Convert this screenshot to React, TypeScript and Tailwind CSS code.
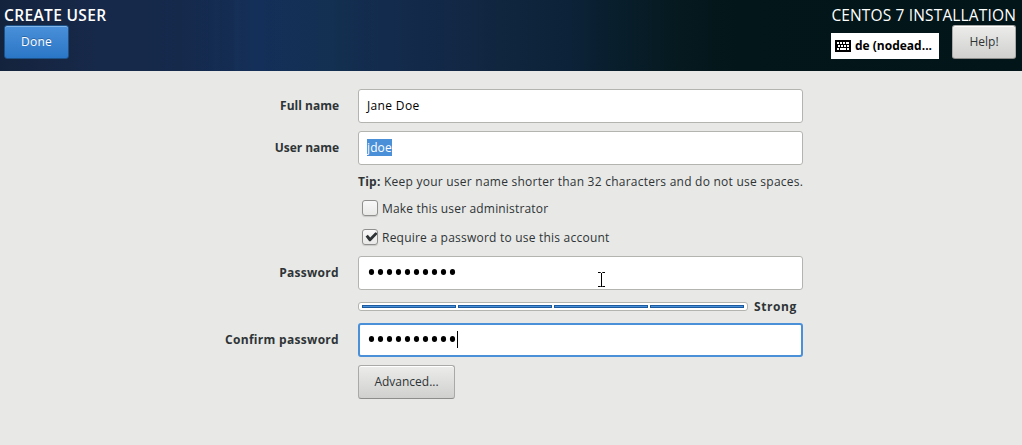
import type { ReactNode } from "react";

const buttonShape =
  "flex h-[34px] items-center justify-center rounded-[3px] border text-[12px] leading-none";
const greyButton =
  "border-[#a9aaa7] border-b-[#8d8e8b] bg-linear-to-b from-[#ececeb] to-[#d0d0ce] text-[#2e3436] shadow-[inset_0_1px_0_#fff]";

function Row({ label, height, children }: { label?: ReactNode; height: string; children: ReactNode }) {
  return (
    <div className={`flex items-center ${height}`}>
      <div className="w-[339px] shrink-0 text-right text-[12px] font-bold whitespace-nowrap">{label}</div>
      <div className="ml-[19px] flex h-full w-[445px] shrink-0 items-center whitespace-nowrap">{children}</div>
    </div>
  );
}

function Field({ focused, children }: { focused?: boolean; children?: ReactNode }) {
  return (
    <div
      className={`relative flex h-[34px] w-full items-center rounded-[3px] bg-white text-[12px] tracking-[0.35px] text-black ${
        focused ? "border-2 border-[#4a90d9] pl-[7px]" : "border border-[#b3b3b0] pl-2"
      }`}
    >
      {children}
    </div>
  );
}

function Dots() {
  return (
    <svg width="90" height="8" viewBox="0 0 90 8" className="-mt-[2px]">
      {Array.from({ length: 10 }, (_, i) => (
        <ellipse key={i} cx={4.5 + i * 9} cy="4" rx="2.6" ry="3" fill="#000" />
      ))}
    </svg>
  );
}

function Checkbox({ checked }: { checked?: boolean }) {
  return (
    <span className="mr-1 ml-1 flex size-4 items-center justify-center rounded-[3px] border border-[#8f908d] bg-linear-to-b from-[#f8f8f8] to-[#e9e9e8] shadow-[0_1px_1px_#c9c9c7]">
      {checked && (
        <svg width="14" height="14" viewBox="0 0 14 14" className="shrink-0">
          <path d="M2.6 6.4 4.8 4.8l2.4 2.6 5.2-5.2L14 3v1.4L7.6 11.2H6.2Z" fill="#2e3436" />
        </svg>
      )}
    </span>
  );
}

function Keyboard() {
  return (
    <svg width="16" height="12" viewBox="0 0 16 12" shapeRendering="crispEdges">
      <rect width="16" height="12" rx="1" fill="#000" />
      <g fill="#fff">
        {[2, 5, 8, 11].map((x) => (
          <rect key={x} x={x} y="2" width="2" height="2" />
        ))}
        <rect x="13" y="2" width="1" height="2" />
        {[3, 6, 9, 12].map((x) => (
          <rect key={x} x={x} y="5" width="2" height="2" />
        ))}
        <rect x="2" y="8" width="2" height="2" />
        <rect x="5" y="8" width="6" height="2" />
        <rect x="12" y="8" width="2" height="2" />
      </g>
    </svg>
  );
}

export default function App() {
  return (
    <div className="h-[445px] w-[1022px] overflow-hidden bg-[#e8e8e6] font-['Open_Sans','Noto_Sans',sans-serif] text-[#2e3436]">
      <header className="flex h-[71px] justify-between bg-[linear-gradient(90deg,transparent_160px,#112a5030_168px,transparent_176px,transparent_200px,#102b5730_210px,#17345b30_216px,transparent_221px,transparent_233px,#1c3d6530_237px,transparent_242px,transparent_262px,#0f2b5530_270px,transparent_285px,transparent_345px,#0f274e40_362px,transparent_374px),linear-gradient(90deg,#14233d_0,#17294a_100px,#15294b_180px,#142c52_230px,#14305a_260px,#132f50_340px,#13294a_420px,#10263f_500px,#0c2238_570px,#081e2b_620px,#05191f_680px,#031619_740px,#021519_100%)] pr-[6px] pl-1 text-white">
        <div className="flex flex-col">
          <h1 className="flex h-[25px] items-center pt-[6px] text-[15.5px] leading-[19px] font-semibold whitespace-nowrap">
            <span className="tracking-[0.35px]">CREATE USER</span>
          </h1>
          <button className={`${buttonShape} w-[65px] border-[#1c5187] bg-linear-to-b from-[#4a90d9] to-[#2a76c6] text-white shadow-[inset_0_1px_0_#83b5e8]`}>
            <span className="tracking-[0.2px] [text-shadow:0_-1px_0_#1c518799]">Done</span>
          </button>
        </div>
        <div className="flex flex-col items-end">
          <div className="flex h-[25px] items-center pt-[6px] text-[15.5px] leading-[19px] whitespace-nowrap">
            <span className="tracking-[0.15px]">CENTOS 7 INSTALLATION</span>
          </div>
          <div className="flex items-end gap-[13px]">
            <div className="flex h-[26px] w-[108px] items-center gap-1 bg-white pl-1 text-[12px] font-bold whitespace-nowrap text-black">
              <Keyboard />
              <span>de (nodead...</span>
            </div>
            <button className={`${buttonShape} ${greyButton} w-16`}>
              <span>Help!</span>
            </button>
          </div>
        </div>
      </header>

      <main className="flex flex-col pt-[18px]">
        <Row label="Full name" height="h-[34px]">
          <Field><span>Jane Doe</span></Field>
        </Row>
        <div className="h-2" />
        <Row label={<span className="tracking-[-0.05px]">User name</span>} height="h-[34px]">
          <Field><span className="-mt-px h-[17px] bg-[#4a90d9] leading-[17px] tracking-[0.1px] text-white">jdoe</span></Field>
        </Row>
        <Row height="h-[34px]">
          <span className="text-[12px] tracking-[0.24px]"><b>Tip:</b> Keep your user name shorter than 32 characters and do not use spaces.</span>
        </Row>
        <Row height="h-[18px]">
          <Checkbox />
          <span className="pt-[2px] text-[12px] tracking-[0.17px]">Make this user administrator</span>
        </Row>
        <div className="h-[11px]" />
        <Row height="h-[18px]">
          <Checkbox checked />
          <span className="pt-[2px] text-[12px] tracking-[0.22px]">Require a password to use this account</span>
        </Row>
        <div className="h-[10px]" />
        <Row label={<span className="tracking-[0.3px]">Password</span>} height="h-[34px]">
          <Field>
            <Dots />
            <svg width="7" height="18" viewBox="0 0 7 18" className="absolute top-[14px] left-[239px] overflow-visible">
              <path d="M0 1.5h2.5l1 1 1-1H7M3.5 2v14M0 15.5h2.5l1-1 1 1H7" fill="none" stroke="#fff" strokeWidth="3" />
              <path d="M0 1.5h2.5l1 1 1-1H7M3.5 2v14M0 15.5h2.5l1-1 1 1H7" fill="none" stroke="#000" />
            </svg>
          </Field>
        </Row>
        <Row height="h-[33px]">
          <div className="flex h-[9px] w-[390px] items-center gap-[2px] rounded-[3px] border border-[#b3b3b0] bg-white px-[3px]">
            {[0, 1, 2, 3].map((n) => (
              <span key={n} className="h-[3px] flex-1 border border-[#1c5a9f] bg-[#4a90d9]" />
            ))}
          </div>
          <span className="ml-[6px] pt-px text-[12px] font-bold tracking-[0.6px]">Strong</span>
        </Row>
        <Row label={<span className="tracking-[0.3px]">Confirm password</span>} height="h-[34px]">
          <Field focused>
            <Dots />
            <span className="-mt-px h-[17px] w-px bg-black" />
          </Field>
        </Row>
        <div className="h-2" />
        <Row height="h-[34px]">
          <button className={`${buttonShape} ${greyButton} w-[97px]`}>
            <span>Advanced...</span>
          </button>
        </Row>
      </main>
    </div>
  );
}
